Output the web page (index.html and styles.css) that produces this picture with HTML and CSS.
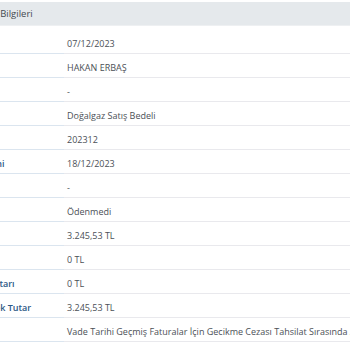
FILE: index.html
```html
<!DOCTYPE html>
<html lang="tr">
<head>
<meta charset="utf-8">
<link rel="stylesheet" href="styles.css">
</head>
<body>
<div class="panel">
  <div class="panel-head">Fatura Ödeme Bilgileri</div>
  <div class="rows">
    <div class="row"><div class="label">Fatura Tarihi</div><div class="value">07/12/2023</div></div>
    <div class="row"><div class="label">Ad Soyad</div><div class="value">HAKAN ERBAŞ</div></div>
    <div class="row"><div class="label">Tesisat No</div><div class="value">-</div></div>
    <div class="row"><div class="label">Açıklama</div><div class="value">Doğalgaz Satış Bedeli</div></div>
    <div class="row"><div class="label">Dönem</div><div class="value">202312</div></div>
    <div class="row"><div class="label">Son Ödeme Tarihi</div><div class="value">18/12/2023</div></div>
    <div class="row"><div class="label">Ödeme Tarihi</div><div class="value">-</div></div>
    <div class="row"><div class="label">Ödeme Durumu</div><div class="value">Ödenmedi</div></div>
    <div class="row"><div class="label">Fatura Tutarı</div><div class="value">3.245,53 TL</div></div>
    <div class="row"><div class="label">Gecikme Zammı</div><div class="value">0 TL</div></div>
    <div class="row"><div class="label">Gecikme Faizi Tutarı</div><div class="value">0 TL</div></div>
    <div class="row"><div class="label">Toplam Ödenecek Tutar</div><div class="value">3.245,53 TL</div></div>
    <div class="row"><div class="label">Açıklama</div><div class="value">Vade Tarihi Geçmiş Faturalar İçin Gecikme Cezası Tahsilat Sırasında Alınacaktır.</div></div>
  </div>
</div>
</body>
</html>
```
FILE: styles.css
```css
html, body {
  margin: 0;
  padding: 0;
  background: #ffffff;
  overflow: hidden;
}
body {
  font-family: "Open Sans", "Liberation Sans", sans-serif;
  font-size: 9px;
  color: #4b5056;
}
.panel {
  width: 700px;
  margin-left: -81px;
  padding-top: 2px;
}
.panel-head {
  height: 23px;
  line-height: 23px;
  background: #e5e9ec;
  border-bottom: 1px solid #eef0f2;
  padding-left: 15px;
  font-size: 9.5px;
  color: #444a50;
  white-space: nowrap;
}
.rows {
  margin-top: 4px;
}
.row {
  display: grid;
  grid-template-columns: 145px 1fr;
  height: 24px;
}
.label,
.value {
  display: flex;
  align-items: center;
  white-space: nowrap;
  padding-top: 3px;
}
.label {
  padding-left: 8px;
  font-weight: 600;
  color: #2c5885;
  border-bottom: 1px solid #dbe5ef;
}
.value {
  padding-left: 3px;
  border-bottom: 1px solid #e9e9ed;
}
```
